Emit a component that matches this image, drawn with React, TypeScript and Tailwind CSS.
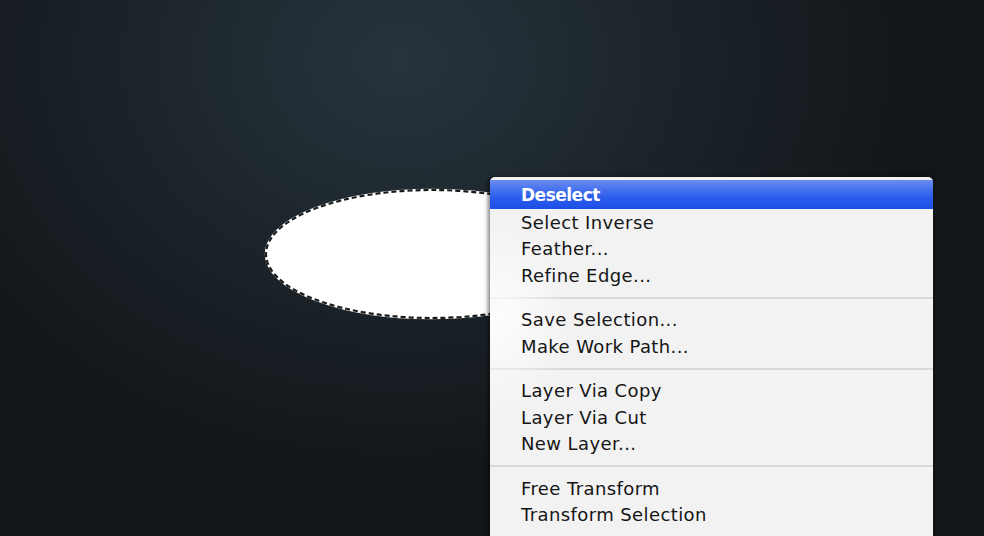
import React from "react";

type Item = { label: string; active?: boolean } | { sep: true };

const items: Item[] = [
  { label: "Deselect", active: true },
  { label: "Select Inverse" },
  { label: "Feather..." },
  { label: "Refine Edge..." },
  { sep: true },
  { label: "Save Selection..." },
  { label: "Make Work Path..." },
  { sep: true },
  { label: "Layer Via Copy" },
  { label: "Layer Via Cut" },
  { label: "New Layer..." },
  { sep: true },
  { label: "Free Transform" },
  { label: "Transform Selection" },
];

export default function App() {
  return (
    <div className="relative w-[984px] h-[536px] overflow-hidden bg-[radial-gradient(ellipse_520px_420px_at_400px_60px,#27343d_0%,#1b2329_55%,#121619_100%)]">
      {/* selection ellipse */}
      <svg className="absolute left-0 top-0" width="984" height="536">
        <ellipse cx="432" cy="254" rx="166" ry="64" fill="#ffffff" stroke="#ffffff" strokeWidth="2.5" />
        <ellipse cx="432" cy="254" rx="166" ry="64" fill="none" stroke="#1a1a1a" strokeWidth="2.2" strokeDasharray="5 3" />
      </svg>

      {/* context menu */}
      <div className="absolute left-[490px] top-[177px] w-[443px] h-[380px] bg-[#f2f2f2] rounded-t-[5px] shadow-[-2px_0_4px_rgba(0,0,0,0.5)] pt-[3px] font-['DejaVu_Sans',sans-serif] text-[18px] tracking-[0.4px] text-[#151515]">
        <div className="absolute left-0 top-[50px] w-[110px] h-[180px] bg-[radial-gradient(ellipse_70px_100px_at_10px_90px,rgba(255,255,255,0.85),rgba(255,255,255,0))] pointer-events-none" />
        {items.map((it, i) =>
          "sep" in it ? (
            <div key={i} className="h-[18px] flex items-center">
              <div className="h-[2px] w-full bg-[#d8d8d8]" />
            </div>
          ) : (
            <div
              key={i}
              className={
                it.active
                  ? "relative h-[29px] pl-[31px] pt-[2px] flex items-center text-white font-bold text-[17px] tracking-[-0.5px] bg-[linear-gradient(#6a8cf2,#2b5cec_60%,#1c4fe6)]"
                  : "relative h-[26.5px] pl-[31px] flex items-center"
              }
            >
              {it.label}
            </div>
          )
        )}
      </div>
    </div>
  );
}
